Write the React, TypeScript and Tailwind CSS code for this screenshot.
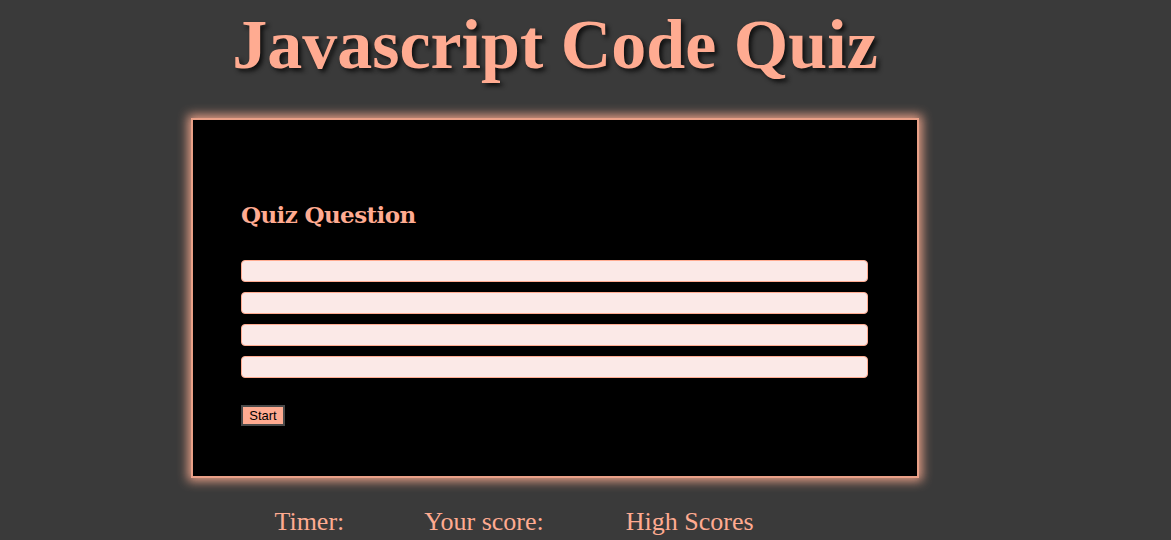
export default function App() {
  const answers = [1, 2, 3, 4];
  return (
    <div className="min-h-[540px] bg-[#3a3a3a] font-['Liberation_Serif',serif]">
      <div className="w-[1110px] flex flex-col items-center">
        <h1 className="mt-[6px] text-[70px] leading-[78px] font-bold text-[#ffab91] [text-shadow:3px_3px_4px_#111]">
          Javascript Code Quiz
        </h1>
        <div className="mt-[34px] w-[728px] h-[360px] bg-black border-2 border-[#e9a087] shadow-[0_0_10px_3px_#e9a087] px-[48px] pt-[80px]">
          <h2 className="text-[23px] leading-[30px] font-bold text-[#ffab91] font-['DejaVu_Serif',serif] tracking-[-0.6px]">
            Quiz Question
          </h2>
          <div className="mt-[30px] flex flex-col gap-[10px]">
            {answers.map((a) => (
              <input
                key={a}
                className="w-[627px] h-[22px] rounded-[4px] bg-[#fbe9e7] border border-[#ffab91] outline-none"
              />
            ))}
          </div>
          <button className="mt-[27px] w-[44px] h-[21px] bg-[#ffab91] border-2 border-[#4a4a4a] text-[13px] leading-[15px] text-black font-['Liberation_Sans',sans-serif]">
            Start
          </button>
        </div>
        <div className="mt-[29px] flex text-[26px] leading-[30px] text-[#ffab91] ml-[-82px]">
          <span>Timer:</span>
          <span className="ml-[80px]">Your score:</span>
          <span className="ml-[82px]">High Scores</span>
        </div>
      </div>
    </div>
  );
}
